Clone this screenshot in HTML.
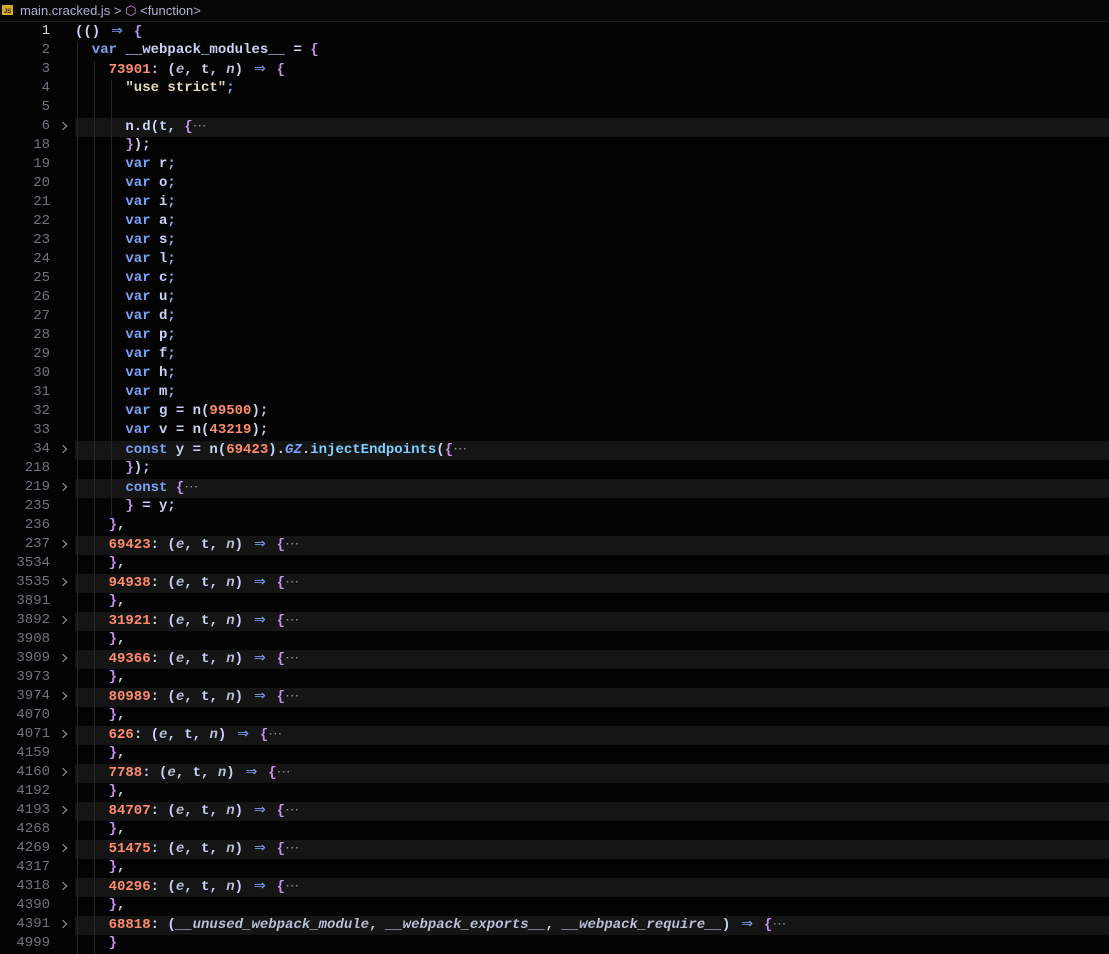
<!DOCTYPE html>
<html><head><meta charset="utf-8"><style>
html,body{margin:0;padding:0;background:#030303;width:1109px;height:945px;overflow:hidden}
.hdr{position:absolute;left:0;top:0;width:1109px;height:21px;background:#070707;border-bottom:1px solid #1c1c1c;font:13px "Liberation Sans",sans-serif;color:#a9b1d6}
.hdr .js{position:absolute;left:2px;top:5px;width:11px;height:10px;background:#d9a72a;color:#222;font:bold 6px "Liberation Sans",sans-serif;line-height:14px;text-align:center}
.hdr .t{position:absolute;left:20px;top:3px;white-space:pre}
.ed{position:absolute;left:0;top:23px;width:1109px}
.row{position:relative;height:19px;line-height:19px;font:bold 14px "Liberation Mono",monospace;white-space:pre;color:#c8d3f5}
.row.f .c{background:#151515}
.ln{position:absolute;left:0;width:50px;text-align:right;color:#6f7480;font-weight:normal}
.row.cur .ln{color:#d0d0d0}
.chev{position:absolute;left:60px;top:5px;width:5px;height:5px;border-right:1.3px solid #9aa0aa;border-top:1.3px solid #9aa0aa;transform:rotate(45deg)}
.c{position:absolute;left:75px;right:0;top:0;height:19px}
.g{position:absolute;top:0;width:1px;height:19px;background:#262626}
.k{color:#7aa2f7}.n{color:#ff8c6b}.p{color:#c792ea}.s{color:#e6d9b5}.o{color:#89b4fa}.i{font-style:italic;color:#b8bfd8}
.a{display:inline-block;width:16.8px;text-align:center;color:#7aa2f7;font-family:"DejaVu Sans",sans-serif;font-weight:normal}
.d{color:#8a8fa0;font-weight:normal}
</style></head><body>
<div class="hdr"><div class="js">JS</div><div class="t">main.cracked.js &gt; <span style="color:#c792ea">⬡</span> &lt;function&gt;</div></div>
<div class="ed" id="ed"></div>
<script>
var A='<span class="a">⇒</span>';
var P='(<span class="i">e</span>, t, <span class="i">n</span>)';
function B(x){return '<span class="p">'+x+'</span>'}
var D='<span class="d">⋯</span>';
var L=[
[1,0,0,'(() '+A+' '+B('{')],
[2,1,0,'<span class="k">var</span> __webpack_modules__ = '+B('{')],
[3,2,0,'<span class="n">73901</span>: '+P+' '+A+' '+B('{')],
[4,3,0,'<span class="s">"use strict"</span><span class="o">;</span>'],
[5,3,0,''],
[6,3,1,'n.d(t, '+B('{')+D],
[18,3,0,B('}')+');'],
];
'r o i a s l c u d p f h m'.split(' ').forEach(function(v,j){L.push([19+j,3,0,'<span class="k">var</span> '+v+'<span class="o">;</span>'])});
L.push([32,3,0,'<span class="k">var</span> g = n(<span class="n">99500</span>);']);
L.push([33,3,0,'<span class="k">var</span> v = n(<span class="n">43219</span>);']);
L.push([34,3,1,'<span class="k">const</span> y = n(<span class="n">69423</span>).<span class="i" style="color:#7aa2f7">GZ</span>.<span style="color:#7dcfff">injectEndpoints</span>('+B('{')+D]);
L.push([218,3,0,B('}')+');']);
L.push([219,3,1,'<span class="k">const</span> '+B('{')+D]);
L.push([235,3,0,B('}')+' = y;']);
L.push([236,2,0,B('}')+',']);
var m=[[237,'69423',3534],[3535,'94938',3891],[3892,'31921',3908],[3909,'49366',3973],[3974,'80989',4070],[4071,'626',4159],[4160,'7788',4192],[4193,'84707',4268],[4269,'51475',4317],[4318,'40296',4390]];
m.forEach(function(x){L.push([x[0],2,1,'<span class="n">'+x[1]+'</span>: '+P+' '+A+' '+B('{')+D]);L.push([x[2],2,0,B('}')+',']);});
L.push([4391,2,1,'<span class="n">68818</span>: (<span class="i">__unused_webpack_module</span>, <span class="i">__webpack_exports__</span>, <span class="i">__webpack_require__</span>) '+A+' '+B('{')+D]);
L.push([4999,2,0,B('}')]);
var h='';
L.forEach(function(r,idx){
 var g2='';for(var q=0;q<r[1];q++){g2+='<div class="g" style="left:'+(q*16.8+2)+'px"></div>';}
 h+='<div class="row'+(r[2]?' f':'')+(idx==0?' cur':'')+'"><span class="ln">'+r[0]+'</span>'+(r[2]?'<span class="chev"></span>':'')+'<div class="c">'+g2+'<span style="position:absolute;left:'+(r[1]*16.8)+'px">'+r[3]+'</span></div></div>';
});
document.getElementById('ed').innerHTML=h;
</script>
</body></html>
